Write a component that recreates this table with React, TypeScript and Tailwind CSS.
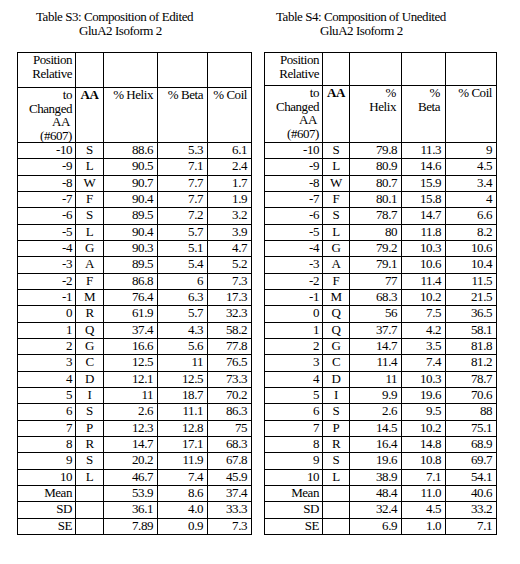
type Row = [string, string, string, string, string]

const edited: Row[] = [
  ['-10', 'S', '88.6', '5.3', '6.1'],
  ['-9', 'L', '90.5', '7.1', '2.4'],
  ['-8', 'W', '90.7', '7.7', '1.7'],
  ['-7', 'F', '90.4', '7.7', '1.9'],
  ['-6', 'S', '89.5', '7.2', '3.2'],
  ['-5', 'L', '90.4', '5.7', '3.9'],
  ['-4', 'G', '90.3', '5.1', '4.7'],
  ['-3', 'A', '89.5', '5.4', '5.2'],
  ['-2', 'F', '86.8', '6', '7.3'],
  ['-1', 'M', '76.4', '6.3', '17.3'],
  ['0', 'R', '61.9', '5.7', '32.3'],
  ['1', 'Q', '37.4', '4.3', '58.2'],
  ['2', 'G', '16.6', '5.6', '77.8'],
  ['3', 'C', '12.5', '11', '76.5'],
  ['4', 'D', '12.1', '12.5', '73.3'],
  ['5', 'I', '11', '18.7', '70.2'],
  ['6', 'S', '2.6', '11.1', '86.3'],
  ['7', 'P', '12.3', '12.8', '75'],
  ['8', 'R', '14.7', '17.1', '68.3'],
  ['9', 'S', '20.2', '11.9', '67.8'],
  ['10', 'L', '46.7', '7.4', '45.9'],
  ['Mean', '', '53.9', '8.6', '37.4'],
  ['SD', '', '36.1', '4.0', '33.3'],
  ['SE', '', '7.89', '0.9', '7.3'],
]

const unedited: Row[] = [
  ['-10', 'S', '79.8', '11.3', '9'],
  ['-9', 'L', '80.9', '14.6', '4.5'],
  ['-8', 'W', '80.7', '15.9', '3.4'],
  ['-7', 'F', '80.1', '15.8', '4'],
  ['-6', 'S', '78.7', '14.7', '6.6'],
  ['-5', 'L', '80', '11.8', '8.2'],
  ['-4', 'G', '79.2', '10.3', '10.6'],
  ['-3', 'A', '79.1', '10.6', '10.4'],
  ['-2', 'F', '77', '11.4', '11.5'],
  ['-1', 'M', '68.3', '10.2', '21.5'],
  ['0', 'Q', '56', '7.5', '36.5'],
  ['1', 'Q', '37.7', '4.2', '58.1'],
  ['2', 'G', '14.7', '3.5', '81.8'],
  ['3', 'C', '11.4', '7.4', '81.2'],
  ['4', 'D', '11', '10.3', '78.7'],
  ['5', 'I', '9.9', '19.6', '70.6'],
  ['6', 'S', '2.6', '9.5', '88'],
  ['7', 'P', '14.5', '10.2', '75.1'],
  ['8', 'R', '16.4', '14.8', '68.9'],
  ['9', 'S', '19.6', '10.8', '69.7'],
  ['10', 'L', '38.9', '7.1', '54.1'],
  ['Mean', '', '48.4', '11.0', '40.6'],
  ['SD', '', '32.4', '4.5', '33.2'],
  ['SE', '', '6.9', '1.0', '7.1'],
]

const cell = 'border border-black align-top p-0 leading-[14px]'

function PosHeader() {
  return (
    <div className="text-right pr-[3px] leading-[13.5px]">
      <div>to</div>
      <div>Changed</div>
      <div className="pr-[2px]">AA</div>
      <div>(#607)</div>
    </div>
  )
}

interface TableProps {
  rows: Row[]
  widths: number[]
  firstRowH: string
  secondRowH: string
  split: boolean
}

function DataTable({ rows, widths, firstRowH, secondRowH, split }: TableProps) {
  const total = widths.reduce((a, b) => a + b, 0) + 1
  return (
    <table className="table-fixed border-collapse border border-black" style={{ width: total }}>
      <colgroup>
        {widths.map((w, i) => (
          <col key={i} style={{ width: w }} />
        ))}
      </colgroup>
      <tbody>
        <tr className={firstRowH}>
          <td className={cell}>
            <div className="text-right pr-[3px] leading-[13.5px]">
              <div>Position</div>
              <div>Relative</div>
            </div>
          </td>
          <td className={cell}></td>
          <td className={cell}></td>
          <td className={cell}></td>
          <td className={cell}></td>
        </tr>
        <tr className={secondRowH}>
          <td className={cell}>
            <PosHeader />
          </td>
          <td className={`${cell} text-center font-bold`}>AA</td>
          {split ? (
            <>
              <td className={`${cell} text-right pr-[5px] leading-[13.5px]`}>
                <div>%</div>
                <div>Helix</div>
              </td>
              <td className={`${cell} text-right pr-[5px] leading-[13.5px]`}>
                <div>%</div>
                <div>Beta</div>
              </td>
            </>
          ) : (
            <>
              <td className={`${cell} text-right pr-[4px]`}>% Helix</td>
              <td className={`${cell} text-right pr-[4px]`}>% Beta</td>
            </>
          )}
          <td className={`${cell} text-right pr-[4px]`}>% Coil</td>
        </tr>
        {rows.map(r => (
          <tr key={r[0]} className="h-[16.33px]">
            <td className={`${cell} text-right pr-[3px]`}>{r[0]}</td>
            <td className={`${cell} text-center`}>{r[1]}</td>
            <td className={`${cell} text-right pr-[4px]`}>{r[2]}</td>
            <td className={`${cell} text-right pr-[4px]`}>{r[3]}</td>
            <td className={`${cell} text-right pr-[4px]`}>{r[4]}</td>
          </tr>
        ))}
      </tbody>
    </table>
  )
}

export default function App() {
  return (
    <div
      className="w-[520px] h-[564px] bg-white text-black flex gap-[12px] pl-[17px] pt-[10px] text-[13px] tracking-[-0.45px]"
      style={{ fontFamily: '"Liberation Serif", "Times New Roman", serif' }}
    >
      <div className="flex flex-col">
        <div className="leading-[14px] h-[28px]">
          <div className="pl-[19px]">Table S3: Composition of Edited</div>
          <div className="pl-[62px]">GluA2 Isoform 2</div>
        </div>
        <div className="mt-[14px]">
          <DataTable
            rows={edited}
            widths={[58, 28, 54, 50, 44]}
            firstRowH="h-[35px]"
            secondRowH="h-[55px]"
            split={false}
          />
        </div>
      </div>

      <div className="flex flex-col">
        <div className="leading-[14px] h-[28px]">
          <div className="pl-[12px]">Table S4: Composition of Unedited</div>
          <div className="pl-[56px]">GluA2 Isoform 2</div>
        </div>
        <div className="mt-[14px]">
          <DataTable
            rows={unedited}
            widths={[58, 27, 52, 44, 51]}
            firstRowH="h-[33px]"
            secondRowH="h-[57px]"
            split={true}
          />
        </div>
      </div>
    </div>
  )
}
